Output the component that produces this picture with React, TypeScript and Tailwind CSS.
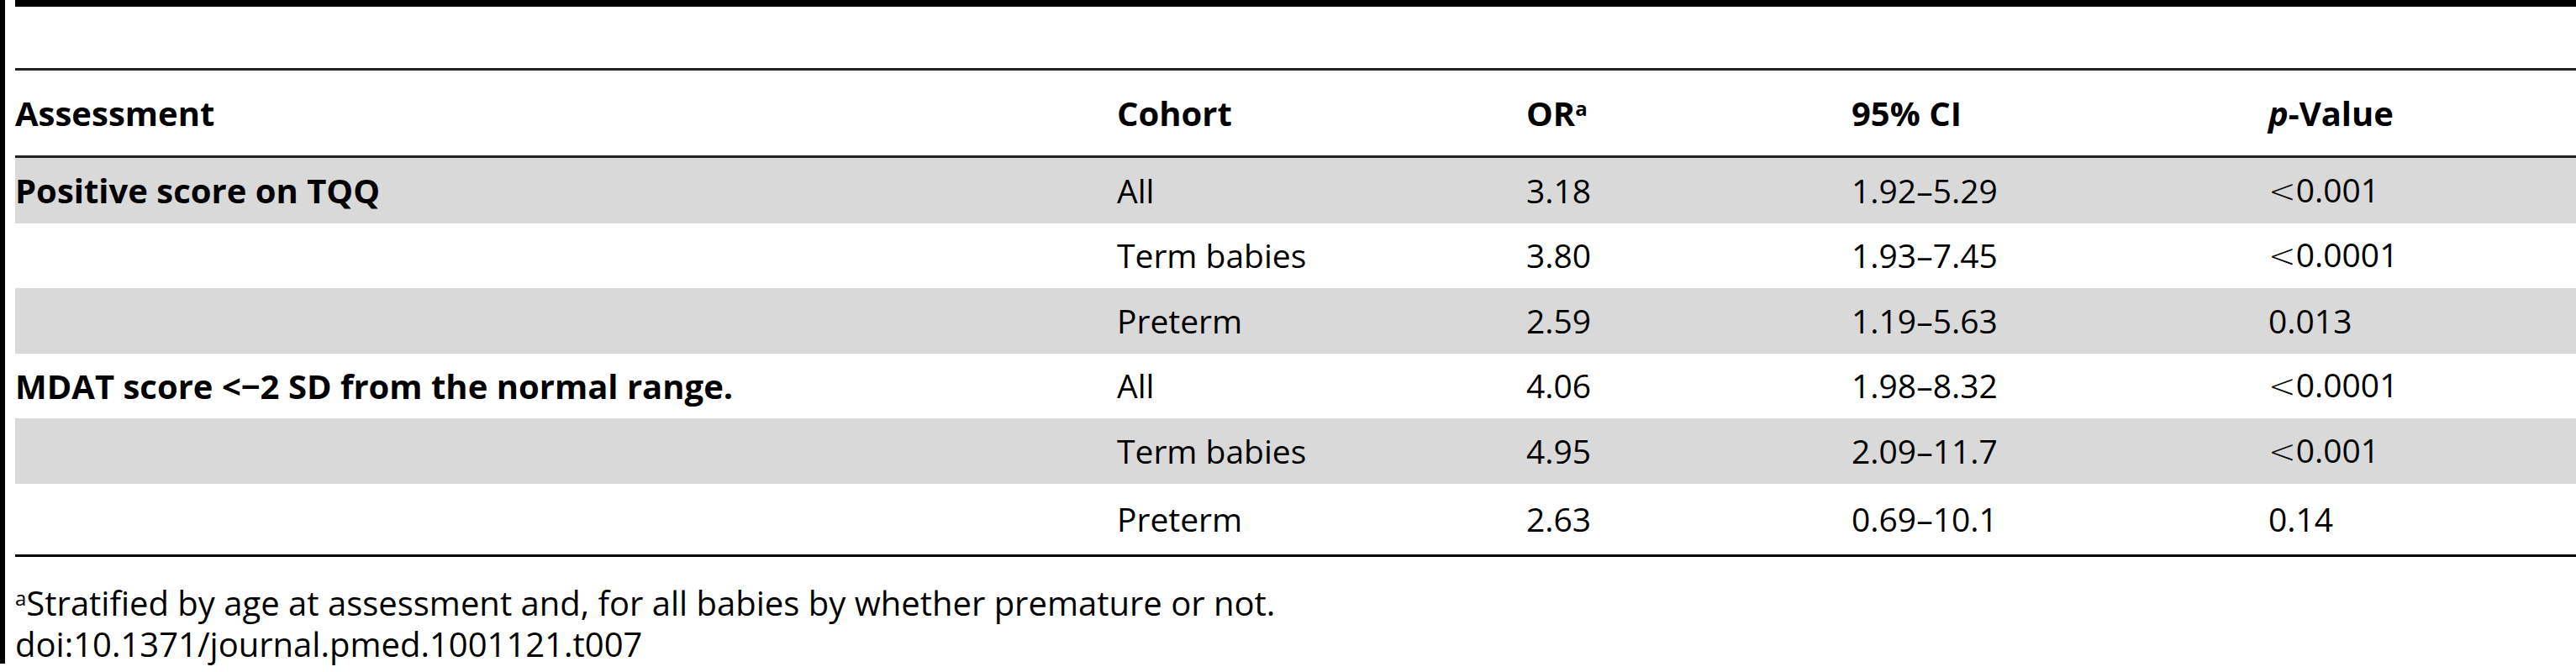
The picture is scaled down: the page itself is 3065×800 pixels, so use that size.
import React from "react";

type Row = {
  assessment?: React.ReactNode;
  cohort: string;
  or: string;
  ci: string;
  p: React.ReactNode;
  shade: boolean;
  h: string;
};

const Lt = () => <span className="font-['DejaVu_Sans',sans-serif] font-light">&lt;</span>;

const rows: Row[] = [
  { assessment: "Positive score on TQQ", cohort: "All", or: "3.18", ci: "1.92–5.29", p: <><Lt />0.001</>, shade: true, h: "h-[78px]" },
  { cohort: "Term babies", or: "3.80", ci: "1.93–7.45", p: <><Lt />0.0001</>, shade: false, h: "h-[77px]" },
  { cohort: "Preterm", or: "2.59", ci: "1.19–5.63", p: "0.013", shade: true, h: "h-[78px]" },
  { assessment: "MDAT score <−2 SD from the normal range.", cohort: "All", or: "4.06", ci: "1.98–8.32", p: <><Lt />0.0001</>, shade: false, h: "h-[77px]" },
  { cohort: "Term babies", or: "4.95", ci: "2.09–11.7", p: <><Lt />0.001</>, shade: true, h: "h-[78px]" },
  { cohort: "Preterm", or: "2.63", ci: "0.69–10.1", p: "0.14", shade: false, h: "h-[84px]" },
];

// column widths measured from the table, last one takes the rest
const cols = "grid grid-cols-[1311px_487px_387px_496px_1fr] items-center";

export default function App() {
  return (
    <div className="flex h-[800px] w-[3065px] bg-white text-black font-['Open_Sans',sans-serif]">
      <div className="h-[790px] w-[6px] shrink-0 bg-black" />
      <div className="ml-[12px] flex flex-1 flex-col">
        <div className="h-[8px] bg-black" />
        <div className="h-[73px]" />
        <div className="h-[3px] bg-[#222]" />

        {/* header */}
        <div className={`${cols} h-[101px] text-[40px] font-bold`}>
          <div>Assessment</div>
          <div>Cohort</div>
          <div>
            OR<sup className="text-[24px] font-bold">a</sup>
          </div>
          <div>95% CI</div>
          <div>
            <span className="italic">p</span>-Value
          </div>
        </div>
        <div className="h-[3px] bg-[#222]" />

        {rows.map((r, i) => (
          <div
            key={i}
            className={`${cols} ${r.h} text-[39px] ${r.shade ? "bg-[#d9d9d9]" : "bg-white"}`}
          >
            <div className="text-[40px] font-bold">{r.assessment}</div>
            <div>{r.cohort}</div>
            <div>{r.or}</div>
            <div>{r.ci}</div>
            <div>{r.p}</div>
          </div>
        ))}
        <div className="h-[3px] bg-black" />

        <div className="pt-[30px] text-[40px] leading-[49px]">
          <div>
            <sup className="text-[24px]">a</sup>Stratified by age at assessment and, for all babies by whether premature or not.
          </div>
          <div>doi:10.1371/journal.pmed.1001121.t007</div>
        </div>
      </div>
    </div>
  );
}
